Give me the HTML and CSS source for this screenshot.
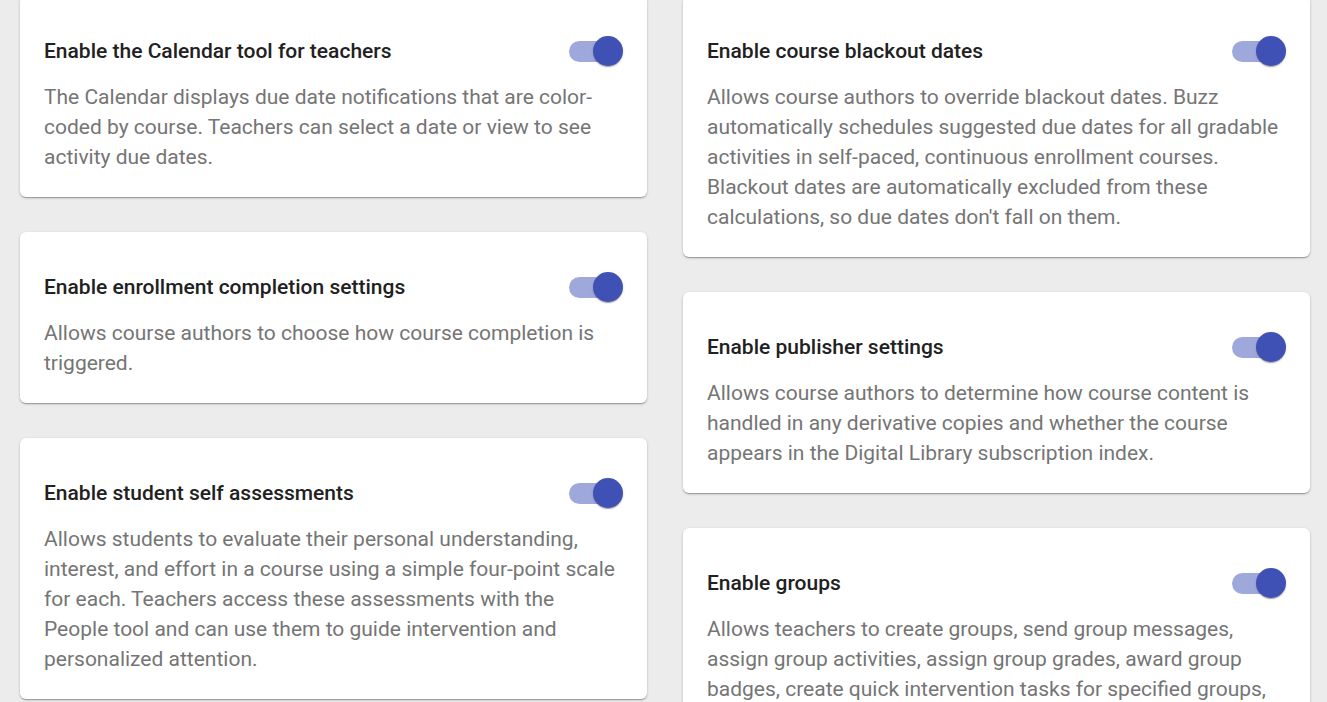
FILE: index.html
```html
<!DOCTYPE html>
<html lang="en">
<head>
    <meta charset="UTF-8">
    <meta name="viewport" content="width=device-width, initial-scale=1.0">
    <title>Course Settings</title>
    <link rel="stylesheet" href="styles.css">
</head>
<body>
    <div class="settings">
        <div class="column">
            <div class="card">
                <div class="card-header">
                    <h3>Enable the Calendar tool for teachers</h3>
                    <span class="toggle"><span class="track"></span><span class="thumb"></span></span>
                </div>
                <p>The Calendar displays due date notifications that are color-coded by course. Teachers can select a date or view to see activity due dates.</p>
            </div>
            <div class="card">
                <div class="card-header">
                    <h3>Enable enrollment completion settings</h3>
                    <span class="toggle"><span class="track"></span><span class="thumb"></span></span>
                </div>
                <p>Allows course authors to choose how course completion is triggered.</p>
            </div>
            <div class="card">
                <div class="card-header">
                    <h3>Enable student self assessments</h3>
                    <span class="toggle"><span class="track"></span><span class="thumb"></span></span>
                </div>
                <p>Allows students to evaluate their personal understanding, interest, and effort in a course using a simple four-point scale for each. Teachers access these assessments with the People tool and can use them to guide intervention and personalized attention.</p>
            </div>
        </div>

        <div class="column">
            <div class="card">
                <div class="card-header">
                    <h3>Enable course blackout dates</h3>
                    <span class="toggle"><span class="track"></span><span class="thumb"></span></span>
                </div>
                <p>Allows course authors to override blackout dates. Buzz automatically schedules suggested due dates for all gradable activities in self-paced, continuous enrollment courses. Blackout dates are automatically excluded from these calculations, so due dates don't fall on them.</p>
            </div>
            <div class="card">
                <div class="card-header">
                    <h3>Enable publisher settings</h3>
                    <span class="toggle"><span class="track"></span><span class="thumb"></span></span>
                </div>
                <p>Allows course authors to determine how course content is handled in any derivative copies and whether the course appears in the Digital Library subscription index.</p>
            </div>
            <div class="card">
                <div class="card-header">
                    <h3>Enable groups</h3>
                    <span class="toggle"><span class="track"></span><span class="thumb"></span></span>
                </div>
                <p>Allows teachers to create groups, send group messages, assign group activities, assign group grades, award group badges, create quick intervention tasks for specified groups, and view group progress in the Gradebook.</p>
            </div>
        </div>
    </div>
</body>
</html>
```

FILE: styles.css
```css
body {
    font-family: Roboto, "Liberation Sans", sans-serif;
    margin: 0;
    padding: 0;
    background-color: #ececec;
    overflow: hidden;
}

.settings {
    display: flex;
    align-items: flex-start;
    gap: 36px;
    padding: 0 17px 0 20px;
    margin-top: -4px;
}

.column {
    width: 627px;
    display: flex;
    flex-direction: column;
    gap: 35px;
}

.card {
    background-color: #fff;
    border-radius: 6px;
    padding: 24px 24px 25px;
    box-shadow: 0 1px 3px rgba(0, 0, 0, 0.2), 0 1px 1px rgba(0, 0, 0, 0.14), 0 2px 1px -1px rgba(0, 0, 0, 0.12);
}

.card-header {
    height: 62px;
    display: flex;
    align-items: center;
    justify-content: space-between;
}

.card-header h3 {
    margin: 0;
    font-size: 21px;
    font-weight: 500;
    line-height: 30px;
    color: #212121;
}

.card p {
    margin: 0;
    font-size: 21px;
    line-height: 30px;
    color: #757575;
}

.toggle {
    position: relative;
    width: 54px;
    height: 30px;
    flex-shrink: 0;
}

.toggle .track {
    position: absolute;
    left: 0;
    top: 4.5px;
    width: 51px;
    height: 21px;
    border-radius: 11px;
    background-color: #9fa8da;
}

.toggle .thumb {
    position: absolute;
    right: 0;
    top: 0;
    width: 30px;
    height: 30px;
    border-radius: 50%;
    background-color: #3f51b5;
    box-shadow: 0 2px 1px -1px rgba(0, 0, 0, 0.2), 0 1px 1px rgba(0, 0, 0, 0.14), 0 1px 3px rgba(0, 0, 0, 0.12);
}
```
